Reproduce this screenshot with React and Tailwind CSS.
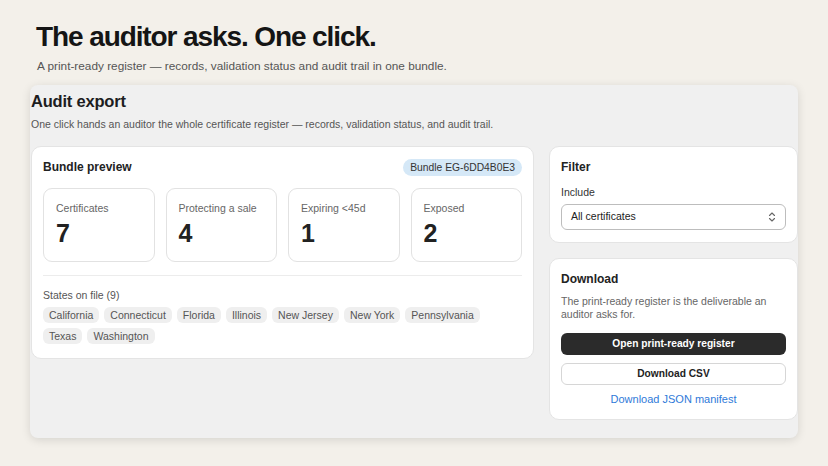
import React from "react";

const states = ["California","Connecticut","Florida","Illinois","New Jersey","New York","Pennsylvania","Texas","Washington"];
const stats = [["Certificates","7"],["Protecting a sale","4"],["Expiring <45d","1"],["Exposed","2"]];

export default function App() {
  return (
    <div className="w-[828px] h-[466px] overflow-hidden bg-[#f3f0ea] px-[30px] text-[#1d1d1f]" style={{fontFamily:'"Liberation Sans", Arial, sans-serif'}}>
      <h1 className="ml-[6px] pt-[20px] text-[28px] leading-[34px] font-bold tracking-[-1.1px] text-[#151515]">The auditor asks. One click.</h1>
      <p className="ml-[7px] mt-[5px] text-[11.8px] leading-[15px] text-[#555]">A print-ready register — records, validation status and audit trail in one bundle.</p>
      <div className="mt-[11px] h-[353px] rounded-[8px] bg-[#f0f0f0] shadow-[0_2px_10px_rgba(0,0,0,0.12)] pl-px pt-[6px]">
        <h2 className="text-[16.5px] leading-[20px] font-semibold text-[#1d1d1f] tracking-[-0.2px]">Audit export</h2>
        <p className="mt-[6px] text-[10.5px] leading-[14px] text-[#555]">One click hands an auditor the whole certificate register — records, validation status, and audit trail.</p>
        <div className="mt-[15px] flex gap-[15px] items-start">
          <div className="w-[503px] rounded-[10px] bg-white border border-[#e4e4e4] px-[11px] pt-[11px] pb-[14px]">
            <div className="flex items-center justify-between h-[18px]">
              <span className="text-[12px] font-semibold text-[#222]">Bundle preview</span>
              <span className="rounded-full bg-[#d5e8f7] px-[7px] text-[10.3px] leading-[17px] text-[#333]">Bundle EG-6DD4B0E3</span>
            </div>
            <div className="mt-[12px] grid grid-cols-4 gap-[11px]">
              {stats.map(([l,v]) => (
                <div key={l} className="h-[74px] rounded-[9px] border border-[#e2e2e2] px-[12px] pt-[13px]">
                  <div className="text-[10.5px] leading-[13px] text-[#666]">{l}</div>
                  <div className="mt-[4px] text-[25px] leading-[28px] font-bold text-[#222]">{v}</div>
                </div>
              ))}
            </div>
            <div className="mt-[13px] border-t border-[#ececec]" />
            <div className="mt-[12px] text-[10.5px] leading-[14px] text-[#555]">States on file (9)</div>
            <div className="mt-[5px] flex flex-wrap gap-x-[5px] gap-y-[5px]">
              {states.map(s => (
                <span key={s} className="rounded-[6px] bg-[#efefef] px-[6px] text-[10.5px] leading-[16px] text-[#555]">{s}</span>
              ))}
            </div>
          </div>
          <div className="flex-1 flex flex-col gap-[15px]">
            <div className="rounded-[10px] bg-white border border-[#e4e4e4] px-[11px] pt-[12px] pb-[12px]">
              <div className="text-[12px] leading-[16px] font-semibold text-[#222]">Filter</div>
              <div className="mt-[10px] text-[10.5px] leading-[14px] text-[#333]">Include</div>
              <div className="mt-[5px] h-[26px] rounded-[6px] border border-[#bdbdbd] flex items-center justify-between px-[9px] text-[10.5px] text-[#222]">
                <span>All certificates</span>
                <svg width="8" height="12" viewBox="0 0 8 12" fill="none" stroke="#666" strokeWidth="1.1" strokeLinecap="round" strokeLinejoin="round"><path d="M1.5 4.5 4 2l2.5 2.5M1.5 7.5 4 10l2.5-2.5"/></svg>
              </div>
            </div>
            <div className="rounded-[10px] bg-white border border-[#e4e4e4] px-[11px] pt-[12px] pb-[13px]">
              <div className="text-[12px] leading-[16px] font-semibold text-[#222]">Download</div>
              <p className="mt-[8px] text-[10.5px] leading-[13px] text-[#666]">The print-ready register is the deliverable an auditor asks for.</p>
              <button className="mt-[12px] w-full h-[22px] rounded-[6px] bg-[#2b2b2b] text-white text-[10.2px] font-semibold">Open print-ready register</button>
              <button className="mt-[8px] w-full h-[22px] rounded-[6px] bg-white border border-[#d6d6d6] text-[#222] text-[10.2px] font-semibold">Download CSV</button>
              <div className="mt-[7px] text-center text-[11px] leading-[14px] text-[#2f7ad9]">Download JSON manifest</div>
            </div>
          </div>
        </div>
      </div>
    </div>
  );
}
